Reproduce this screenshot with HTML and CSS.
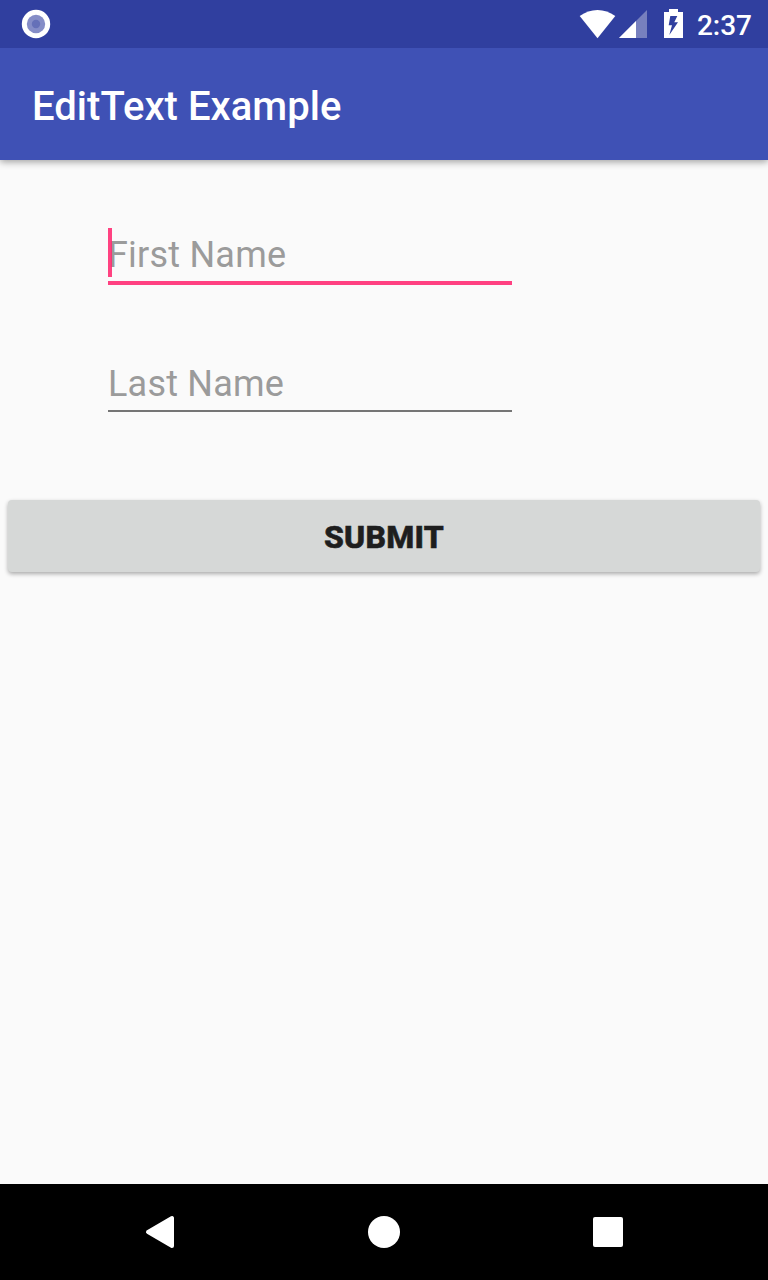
FILE: index.html
```html
<!DOCTYPE html>
<html lang="en">
<head>
<meta charset="utf-8">
<title>EditText Example</title>
<link rel="stylesheet" href="styles.css">
</head>
<body>
<div class="screen">
  <div class="status-bar">
    <svg class="notification" width="30" height="30" viewBox="0 0 30 30">
      <circle cx="15" cy="15" r="14.2" fill="#fff"/>
      <circle cx="15" cy="15" r="9.2" fill="#858dc7"/>
      <circle cx="15" cy="15" r="4.2" fill="#6570b8"/>
    </svg>
    <div class="system">
      <svg class="wifi" width="36" height="30" viewBox="0 0 36 30"><path d="M17.5 29.2-.3 7Q8 1 17.5 1T35.3 7Z" fill="#fff"/></svg>
      <svg class="signal" width="28" height="28" viewBox="0 0 28 28"><path d="M28 0V28H0Z" fill="#7780be"/><path d="M17 11V28H0Z" fill="#fff"/></svg>
      <svg class="battery" width="19" height="29" viewBox="0 0 19 29"><path d="M5 0H14V3H19V29H0V3H5Z" fill="#fff"/><path d="M6.3 7H13.3L10.3 13.2H14L5.3 26 8 16.3H4.7Z" fill="#303f9f"/></svg>
      <span class="clock">2:37</span>
    </div>
  </div>
  <header class="app-bar"><h1 class="title">EditText Example</h1></header>
  <main class="content">
    <div class="field focused"><span class="hint">First Name</span><span class="cursor"></span></div>
    <div class="field"><span class="hint">Last Name</span></div>
    <button class="submit" type="button">SUBMIT</button>
  </main>
  <nav class="nav-bar">
    <div class="nav-item"><svg width="32" height="36" viewBox="0 0 32 36"><path d="M4 18 28 4V32Z" fill="#fff" stroke="#fff" stroke-width="4" stroke-linejoin="round"/></svg></div>
    <div class="nav-item"><svg width="32" height="32" viewBox="0 0 32 32"><circle cx="16" cy="16" r="16" fill="#fff"/></svg></div>
    <div class="nav-item"><svg width="30" height="30" viewBox="0 0 30 30"><rect width="30" height="30" rx="2" fill="#fff"/></svg></div>
  </nav>
</div>
</body>
</html>
```
FILE: styles.css
```css
* { box-sizing: border-box; }
body { margin: 0; font-family: Roboto, sans-serif; background: #fafafa; }
svg { display: block; flex: none; overflow: visible; }
.screen { display: flex; flex-direction: column; width: 768px; height: 1280px; overflow: hidden; }
.status-bar { position: relative; z-index: 1; display: flex; justify-content: space-between; height: 48px; padding: 9px 16px 0 21px; background: #303f9f; }
.system { display: flex; align-items: flex-start; }
.signal { margin: 1px 0 0 3px; }
.battery { margin-left: 17px; }
.clock { margin-left: 14px; color: #fff; font-size: 28px; font-weight: 500; line-height: 33px; }
.app-bar { display: flex; align-items: center; height: 112px; padding: 6px 32px 0; background: #3f51b5; box-shadow: 0 2px 7px rgba(0, 0, 0, .36); }
.title { margin: 0; color: #fff; font-size: 40px; font-weight: 500; line-height: 48px; letter-spacing: .04px; }
.content { display: flex; flex-direction: column; flex: 1; padding: 68px 8px 0; }
.field { position: relative; width: 404px; height: 56px; margin-left: 100px; border-bottom: 2px solid #757575; color: #9b9b9b; font-size: 36px; line-height: 56px; letter-spacing: .22px; }
.field.focused { height: 57px; margin-bottom: 71px; border-bottom: 4px solid #ff4081; line-height: 54px; }
.hint { display: block; }
.cursor { position: absolute; top: 0; left: 0; width: 4px; height: 49px; background: rgba(255, 40, 112, .88); }
.submit { height: 72px; margin: 88px 0 0; padding: 2px 0 0; border: 0; border-radius: 4px; background: #d6d8d7; box-shadow: 0 2px 4px rgba(0, 0, 0, .32); color: #1e1e1e; font: 800 32px/36px Roboto, sans-serif; letter-spacing: .2px; -webkit-text-stroke: .6px #1e1e1e; }
.nav-bar { display: flex; justify-content: center; height: 96px; background: #000; }
.nav-item { display: flex; align-items: center; justify-content: center; width: 224px; }
```
